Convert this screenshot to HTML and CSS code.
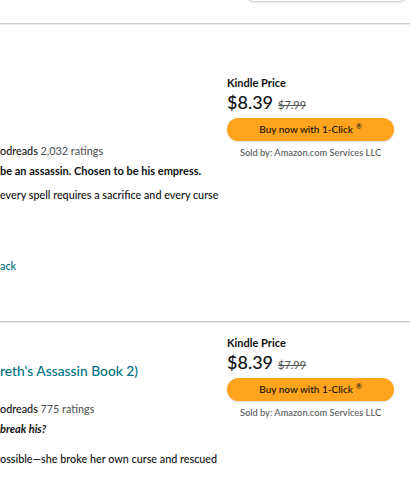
FILE: index.html
```html
<!DOCTYPE html>
<html lang="en">
<head>
<meta charset="utf-8">
<title>Results</title>
<link rel="stylesheet" href="styles.css">
</head>
<body>
<div class="results">
  <div class="topbar"><div class="sortbox"></div></div>

  <div class="item item-first">
    <div class="info">
      <p class="ratings">odreads <span class="count">2,032 ratings</span></p>
      <p class="tagline">be an assassin. Chosen to be his empress.</p>
      <p class="desc">every spell requires a sacrifice and every curse</p>
      <p class="format"><a href="#">ack</a></p>
    </div>
    <div class="buy">
      <div class="buy-label">Kindle Price</div>
      <div class="price-row"><span class="price">$8.39</span><span class="list-price">$7.99</span></div>
      <button class="one-click">Buy now with 1-Click<sup>®</sup></button>
      <div class="seller">Sold by: Amazon.com Services LLC</div>
    </div>
  </div>

  <div class="item item-second">
    <div class="info">
      <p class="title"><a href="#">reth's Assassin Book 2)</a></p>
      <p class="ratings">odreads <span class="count">775 ratings</span></p>
      <p class="tagline tagline-italic">break his?</p>
      <p class="desc">ossible—she broke her own curse and rescued</p>
    </div>
    <div class="buy">
      <div class="buy-label">Kindle Price</div>
      <div class="price-row"><span class="price">$8.39</span><span class="list-price">$7.99</span></div>
      <button class="one-click">Buy now with 1-Click<sup>®</sup></button>
      <div class="seller">Sold by: Amazon.com Services LLC</div>
    </div>
  </div>
</div>
</body>
</html>
```

FILE: styles.css
```css
* { box-sizing: border-box; }

html, body {
  margin: 0;
  padding: 0;
  background: #fff;
}

body {
  font-family: Lato, "Open Sans", sans-serif;
  font-weight: 500;
  color: #0f1111;
  font-size: 10.8px;
  line-height: 14px;
  overflow: hidden;
}

p { margin: 0; }

a { color: #007185; text-decoration: none; }

.topbar {
  height: 23px;
  display: flex;
  justify-content: flex-end;
  padding-right: 3px;
}

.sortbox {
  width: 161px;
  height: 30px;
  margin-top: -28px;
  border: 1px solid #d5d9d9;
  border-radius: 8px;
  background: #fff;
  box-shadow: 0 1px 2px rgba(15, 17, 17, 0.12);
}

.item {
  display: flex;
  border-top: 1px solid #cfcfcf;
  box-shadow: inset 0 1px 0 #e9e9e9;
}

.info {
  flex: 1;
  min-width: 0;
  white-space: nowrap;
  overflow: hidden;
}

.item-first .info { padding-top: 120px; padding-bottom: 48px; }
.item-second .info { padding-top: 39px; }

.ratings { color: #0f1111; }
.ratings .count { color: #565959; }

.tagline { font-weight: 700; font-size: 11px; margin-top: 6px; }
.tagline-italic { font-style: italic; }

.item-first .desc { margin-top: 10px; }
.item-second .desc { margin-top: 16px; }

.format { margin-top: 57px; }

.title {
  font-size: 13.8px;
  line-height: 20px;
}
.item-second .ratings { margin-top: 21px; }

.buy {
  width: 183px;
  padding-right: 16px;
  display: flex;
  flex-direction: column;
}

.item-first .buy { padding-top: 52px; }
.item-second .buy { padding-top: 14px; }

.buy-label {
  font-weight: 700;
  font-size: 11px;
  line-height: 14px;
}

.price-row {
  margin-top: 1px;
  font-size: 18px;
  line-height: 22px;
  height: 22px;
}

.price { font-size: 18px; }

.list-price {
  font-size: 11px;
  line-height: 1;
  margin-left: 5px;
  color: #565959;
  text-decoration: line-through;
}

.one-click {
  margin-top: 5px;
  height: 23px;
  width: 100%;
  border: 0;
  border-radius: 12px;
  background: #ffa41c;
  box-shadow: 0 1px 2px rgba(15, 17, 17, 0.15);
  font-family: inherit;
  font-weight: 500;
  font-size: 10px;
  line-height: 23px;
  color: #0f1111;
  padding: 0;
}

.one-click sup {
  font-size: 7px;
  line-height: 0;
  vertical-align: 4px;
  margin-left: 3px;
}

.seller {
  margin-top: 5px;
  font-size: 9.3px;
  line-height: 13px;
  text-align: center;
  color: #565959;
}
```
